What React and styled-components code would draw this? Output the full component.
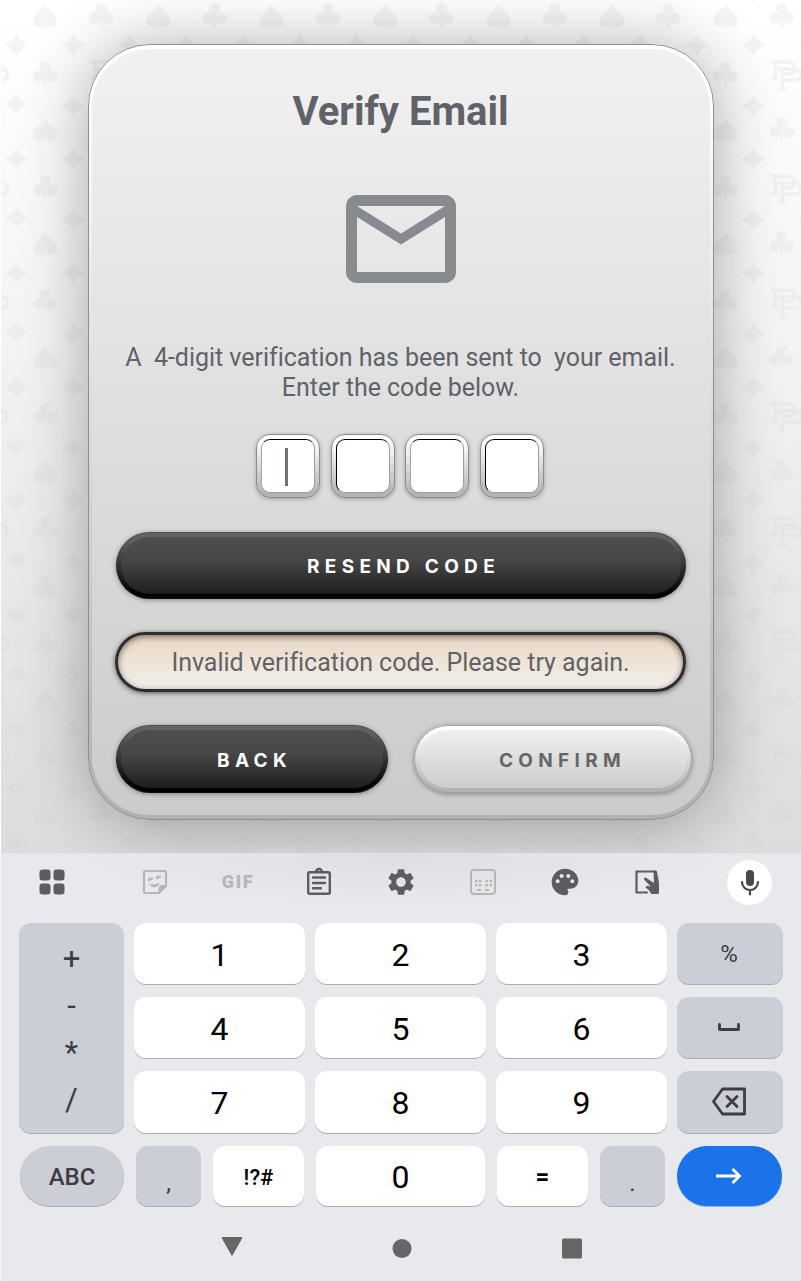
import React from "react";
import styled, { createGlobalStyle, css } from "styled-components";
import { MdMailOutline, MdSettings, MdPalette } from "react-icons/md";

const GlobalStyle = createGlobalStyle`
  * { box-sizing: border-box; }
  html, body { margin: 0; padding: 0; }
  body { font-family: Roboto, sans-serif; background: #fff; overflow: hidden; }
`;

const Screen = styled.main`
  width: 801px;
  height: 1281px;
  display: flex;
  flex-direction: column;
  overflow: hidden;
`;

const Stage = styled.section`
  position: relative;
  height: 853px;
  padding: 44px 0 0 87px;
  border-left: 1px solid #fff;
  background: linear-gradient(#ffffff 0%, #fefefe 5%, #f4f4f4 38%, #dcdcdc 100%);
  overflow: hidden;
`;

const Backdrop = styled.svg`
  position: absolute;
  inset: 0 auto auto -1px;
  display: block;
`;

const Card = styled.div`
  position: relative;
  width: 626px;
  height: 776px;
  border-radius: 62px;
  border: 1px solid #8f8f8f;
  padding: 4px 3px;
  background: linear-gradient(#ffffff 0%, #ffffff 6%, #b0b0b0 100%);
  box-shadow: 0 3px 66px rgba(0, 0, 0, 0.33);
`;

const CardFace = styled.div`
  height: 100%;
  border-radius: 58px;
  padding: 39px 1px 0 0;
  display: flex;
  flex-direction: column;
  align-items: center;
  background: linear-gradient(#f1f1f1, #cbcbcb);
  color: #5f6368;
`;

const Title = styled.h1`
  margin: 0 0 37px;
  font-size: 40px;
  line-height: 48px;
  font-weight: 700;
`;

const MailIcon = styled(MdMailOutline)`
  width: 132px;
  height: 132px;
  color: #878a8f;
  margin-bottom: 38px;
  flex: none;
`;

const Message = styled.p`
  margin: 0 0 31px;
  font-size: 25px;
  line-height: 30px;
  letter-spacing: -0.03px;
  text-align: center;
  white-space: pre;
`;

const CodeRow = styled.div`
  display: flex;
  gap: 10.5px;
  margin: 0 1px 34px 0;
`;

const CodeBox = styled.div`
  width: 64px;
  height: 64px;
  padding: 4px;
  border: 1px solid #8b8b8b;
  border-radius: 14px;
  background: linear-gradient(#fff 10%, #b2b2b2 95%);
  box-shadow: 0 1px 4px rgba(0, 0, 0, 0.28);
`;

const CodeField = styled.div`
  height: 54px;
  border-radius: 9px;
  border: 1px solid #9d9d9d;
  border-top-color: #000;
  border-left-color: ${(p) => (p.$edge ? "#000" : "#a5a5a5")};
  background: #fff;
  padding: 8px 0 0 23px;
`;

const Caret = styled.div`
  width: 3px;
  height: 38px;
  background: #6d7278;
`;

const tones = {
  dark: css`
    background: linear-gradient(#4f4f4f 0%, #474747 40%, #1e1e1e 100%) padding-box,
      linear-gradient(#646464 0%, #5e5e5e 15%, #000 92%) border-box;
    color: #fff;
  `,
  light: css`
    background: linear-gradient(#f0f0f0, #cccccc) padding-box,
      linear-gradient(#ffffff 8%, #b1b1b1 95%) border-box;
    color: #666;
  `,
};

const PillButton = styled.button`
  width: ${(p) => p.$width}px;
  height: ${(p) => p.$height || 68}px;
  padding: ${(p) => p.$inset || "3px 0 0 6px"};
  flex: none;
  border-radius: 34px;
  border: 5px solid transparent;
  ${(p) => tones[p.$tone]}
  outline: 1px solid ${(p) => (p.$tone === "dark" ? "rgba(40,40,40,.35)" : "#a0a0a0")};
  outline-offset: -1px;
  box-shadow: 0 1px 5px rgba(0, 0, 0, 0.38);
  font-family: Inter, sans-serif;
  font-size: 19px;
  font-weight: 700;
  letter-spacing: ${(p) => p.$track || 5.3}px;
`;

const ErrorPill = styled.div`
  width: 571px;
  height: 60px;
  margin: 33px 0;
  border-radius: 30px;
  border: 3px solid #2b2d2e;
  background: linear-gradient(#eadaca, #ecdfd0 30%, #f0e9df 72%, #f1efea);
  box-shadow: inset 0 2px 6px rgba(60, 40, 20, 0.6), 0 1px 5px rgba(0, 0, 0, 0.6);
  font-size: 25px;
  line-height: 55px;
  letter-spacing: -0.03px;
  text-align: center;
`;

const ButtonRow = styled.div`
  width: 576px;
  margin-left: 6px;
  display: flex;
  justify-content: space-between;
`;

const Keyboard = styled.section`
  height: 428px;
  border-left: 1px solid #f6f6f8;
  border-top: 1px solid #e2e3e6;
  background: radial-gradient(ellipse 330px 52px at 400px 0, #dedfe3, rgba(232, 233, 237, 0)) #e8e9ed;
  color: #3c4043;
`;

const Toolbar = styled.div`
  height: 57px;
  padding: 0 29px 2px 31px;
  display: flex;
  align-items: center;
  justify-content: space-between;
`;

const ToolGroup = styled.div`
  display: flex;
  width: 532px;
  margin-left: 2px;
  justify-content: space-between;
`;

const Tool = styled.div`
  width: 40px;
  height: 40px;
  display: flex;
  align-items: center;
  justify-content: center;
  color: ${(p) => (p.$faded ? "#b5b6b8" : "#5c5d60")};
  svg { display: block; }
`;

const MicButton = styled(Tool)`
  width: 45px;
  height: 45px;
  border-radius: 50%;
  background: #fff;
  color: #484848;
  margin-top: 1px;
`;

const GifLabel = styled.span`
  font: 900 18px/20px Roboto, sans-serif;
  letter-spacing: 1.6px;
  padding-left: 3px;
`;

const Keys = styled.div`
  display: grid;
  grid-template-columns: 105px 171px 171px 171px 106px;
  grid-template-rows: 61px 61px 62px;
  gap: 13px 10px;
  padding: 12px 0 0 18px;
`;

const Key = styled.div`
  display: flex;
  align-items: center;
  justify-content: center;
  border-radius: ${(p) => (p.$pill ? 31 : 12)}px;
  background: ${(p) => (p.$soft ? "#cbced6" : "#fff")};
  color: ${(p) => (p.$soft ? "#3c3d3f" : "#000")};
  box-shadow: 0 1px 0 #abadb1;
  font-size: ${(p) => p.$size || 32}px;
  font-weight: ${(p) => p.$weight || 400};
  padding-top: ${(p) => p.$drop || 2}px;
  ${(p) => p.$width && `width: ${p.$width}px;`}
`;

const SideKey = styled(Key)`
  padding: 0 2px 0 0;
`;

const EnterKey = styled(SideKey)`
  background: #1a73e8;
  box-shadow: 0 1px 0 #8fb2e0;
`;

const OperatorKey = styled(Key)`
  grid-row: span 3;
  flex-direction: column;
  justify-content: flex-start;
  padding: 12px 0 0;
`;

const Operator = styled.span`
  height: 47px;
  line-height: 47px;
`;

const BottomKeys = styled.div`
  display: flex;
  height: 60px;
  width: 762px;
  margin: 13px 0 0 19px;
  justify-content: space-between;
`;

const NavBar = styled.div`
  display: flex;
  width: 364px;
  margin: 30px 0 0 218.5px;
  justify-content: space-between;
  svg { display: block; }
`;

const Spade = ({ x, y }) => (
  <path
    transform={`translate(${x} ${y})`}
    d="M0-11C3-5 12-1 12 6c0 4-3 6-6 6-2 0-4-1-5-3 0 2 0 3 1 4h-4c1-1 1-2 1-4-1 2-3 3-5 3-3 0-6-2-6-6C-12-1-3-5 0-11Z"
  />
);
const Club = ({ x, y }) => (
  <g transform={`translate(${x} ${y})`}>
    <circle cy="-6.5" r="5.5" />
    <circle cx="-6.5" cy="3" r="5.8" />
    <circle cx="6.5" cy="3" r="5.8" />
    <path d="M-2-3h4v6C1 6 1 9 2 12h-4C-1 9-1 6-2 3Z" />
  </g>
);
const Diamond = ({ x, y }) => (
  <path transform={`translate(${x} ${y})`} d="M0-11Q4-3 12 0Q4 3 0 11Q-4 3-12 0Q-4-3 0-11Z" />
);

const Monogram = ({ x }) => (
  <g transform={`translate(${x} 60)`} fill="none" stroke="#000">
    <path d="M0 2h17q7 0 7 6t-7 6H11M5 2v17M1 19h7" strokeWidth="3.600" />
    <path d="M7 9h18q6 0 6 5.500t-6 5.500H14M12 9v20M8 29h8" strokeWidth="3.600" />
  </g>
);

const Suits = () => (
  <Backdrop width="801" height="853">
    <defs>
      <pattern id="suits" width="113.4" height="114" patternUnits="userSpaceOnUse">
        <Spade x={45} y={15} />
        <Club x={101.2} y={15} />
        <Diamond x={16.4} y={45} />
        <Diamond x={73} y={45} />
        <Club x={45} y={73} />
        <Monogram x={90} />
        <Monogram x={-23.4} />
        <Diamond x={16.4} y={104} />
        <Diamond x={73} y={106} />
        <Diamond x={73} y={-8} />
      </pattern>
      <pattern id="clubsColumn" width="113.4" height="114" patternUnits="userSpaceOnUse">
        <Club x={101.2} y={15} />
      </pattern>
      <linearGradient id="fade" x2="0" y2="1">
        <stop stopColor="#fff" />
        <stop offset="1" stopColor="#444" />
      </linearGradient>
      <mask id="fadeMask">
        <rect width="801" height="853" fill="url(#fade)" />
      </mask>
    </defs>
    <rect width="801" height="853" fill="url(#suits)" opacity="0.038" mask="url(#fadeMask)" />
  </Backdrop>
);

const stroke = {
  fill: "none",
  stroke: "currentColor",
  strokeLinecap: "round",
  strokeLinejoin: "round",
};

const AppsIcon = () => (
  <svg width="26" height="26" fill="currentColor">
    <rect x="0.5" y="0.5" width="11" height="11" rx="3" />
    <rect x="14.5" y="0.5" width="11" height="11" rx="3" />
    <rect x="0.5" y="14.5" width="11" height="11" rx="3" />
    <rect x="14.5" y="14.5" width="11" height="11" rx="3" />
  </svg>
);
const StickerIcon = () => (
  <svg width="26" height="26" {...stroke} strokeWidth="2.2">
    <path d="M3 2h20a1 1 0 0 1 1 1v14l-7 7H3a1 1 0 0 1-1-1V3a1 1 0 0 1 1-1Z" />
    <path d="M17 24v-4.500a3 3 0 0 1 3-3h4Z" fill="currentColor" strokeWidth="1" />
    <path d="M7 11q1-1.800 2.800-1M15 9q1-1.800 2.800-1" strokeWidth="2.600" />
    <path d="M8 15.500q5 1.500 9-1.500-1 4-4.500 4T8 15.500Z" fill="currentColor" strokeWidth=".8" />
  </svg>
);
const ClipboardIcon = () => (
  <svg width="26" height="30" {...stroke} strokeWidth="2.400">
    <rect x="2.200" y="5.200" width="21.600" height="21.600" rx="1.500" />
    <path d="M10 5a3 3 0 0 1 6 0" />
    <path d="M7 10.500h12M7 16h12M7 21.300h8" />
  </svg>
);
const KeypadIcon = () => (
  <svg width="28" height="28" fill="currentColor">
    <rect x="2" y="2" width="24" height="24" rx="3" fill="none" stroke="currentColor" strokeWidth="2" />
    {[6, 10, 16.500, 20.500].map((x) =>
      [12, 16].map((y) => <rect key={`${x}-${y}`} x={x} y={y} width="2.400" height="2.400" />)
    )}
    <rect x="8" y="21" width="4" height="2" />
    <rect x="16" y="21" width="4" height="2" />
  </svg>
);
const HandwritingIcon = () => (
  <svg width="26" height="26">
    <path d="M13 23.500H2.500v-21H21" {...stroke} strokeWidth="2.200" />
    <path
      d="M19.500 1.500h2q1.300 0 1.500 1.300L25 14v9.500q0 1.500-1.500 1.500h-5q-1.500 0-2.300-1.500-1.700-3.500-4.700-5l1.200-1.700 4 .7-6.500-6.800q-.8-2 1.300-2.200l8.500 5.500Z"
      fill="currentColor"
    />
  </svg>
);
const MicIcon = () => (
  <svg width="20" height="27">
    <rect x="6" y="1" width="8" height="16" rx="4" fill="currentColor" />
    <path d="M2 13a8 8 0 0 0 16 0M10 21v4.500" {...stroke} strokeWidth="2.200" />
  </svg>
);
const SpaceIcon = () => (
  <svg width="24" height="12" {...stroke} strokeWidth="2.800">
    <path d="M2.500 2.500v5h19v-5" />
  </svg>
);
const BackspaceIcon = () => (
  <svg width="38" height="32" {...stroke} strokeWidth="2.800">
    <path d="M12.500 3h22v25h-22L3.500 15.500Z" />
    <path d="m17 10.500 10 10m0-10-10 10" />
  </svg>
);
const ArrowIcon = () => (
  <svg width="28" height="18" fill="none" stroke="#fff" strokeWidth="2.800">
    <path d="M1 9h24M17.500 2l7 7-7 7" />
  </svg>
);

export default function App() {
  return (
    <Screen>
      <GlobalStyle />
      <Stage>
        <Suits />
        <Card>
          <CardFace>
            <Title>Verify Email</Title>
            <MailIcon />
            <Message>{"A  4-digit verification has been sent to  your email.\nEnter the code below."}</Message>
            <CodeRow>
              {[0, 1, 2, 3].map((i) => (
                <CodeBox key={i}>
                  <CodeField $edge={i % 2 === 1}>{i === 0 && <Caret />}</CodeField>
                </CodeBox>
              ))}
            </CodeRow>
            <PillButton $tone="dark" $width={570} $height={67} $inset="1px 0 0 6px">RESEND CODE</PillButton>
            <ErrorPill>Invalid verification code. Please try again.</ErrorPill>
            <ButtonRow>
              <PillButton $tone="dark" $width={272}>BACK</PillButton>
              <PillButton $tone="light" $width={278} $inset="3px 0 0 20px">CONFIRM</PillButton>
            </ButtonRow>
          </CardFace>
        </Card>
      </Stage>
      <Keyboard>
        <Toolbar>
          <Tool><AppsIcon /></Tool>
          <ToolGroup>
            <Tool $faded><StickerIcon /></Tool>
            <Tool $faded><GifLabel>GIF</GifLabel></Tool>
            <Tool><ClipboardIcon /></Tool>
            <Tool><MdSettings size={32} /></Tool>
            <Tool $faded><KeypadIcon /></Tool>
            <Tool><MdPalette size={32} /></Tool>
            <Tool><HandwritingIcon /></Tool>
          </ToolGroup>
          <MicButton><MicIcon /></MicButton>
        </Toolbar>
        <Keys>
          <OperatorKey $soft $size={31}>
            {["+", "-", "*", "/"].map((o) => <Operator key={o}>{o}</Operator>)}
          </OperatorKey>
          <Key>1</Key>
          <Key>2</Key>
          <Key>3</Key>
          <SideKey $soft $size={24}>%</SideKey>
          <Key>4</Key>
          <Key>5</Key>
          <Key>6</Key>
          <SideKey $soft><SpaceIcon /></SideKey>
          <Key>7</Key>
          <Key>8</Key>
          <Key>9</Key>
          <SideKey $soft><BackspaceIcon /></SideKey>
        </Keys>
        <BottomKeys>
          <Key $soft $pill $width={104} $size={24} $weight={500}>ABC</Key>
          <Key $soft $width={65} $size={24} $drop={13}>,</Key>
          <Key $width={91} $size={22} $weight={500}>!?#</Key>
          <Key $width={169}>0</Key>
          <Key $width={91} $size={24} $weight={700}>=</Key>
          <Key $soft $width={65} $size={24} $drop={13}>.</Key>
          <EnterKey $pill $width={105}><ArrowIcon /></EnterKey>
        </BottomKeys>
        <NavBar>
          <svg width="24" height="24" fill="#666"><path d="M2.500 1h19a.8.8 0 0 1 .7 1.200L13 18.500a1 1 0 0 1-2 0L1.800 2.200a.8.8 0 0 1 .7-1.200Z" /></svg>
          <svg width="24" height="24" fill="#666"><circle cx="12" cy="12.500" r="9.500" /></svg>
          <svg width="24" height="24" fill="#666"><rect x="2" y="2.500" width="20" height="20" rx="1.500" /></svg>
        </NavBar>
      </Keyboard>
    </Screen>
  );
}
